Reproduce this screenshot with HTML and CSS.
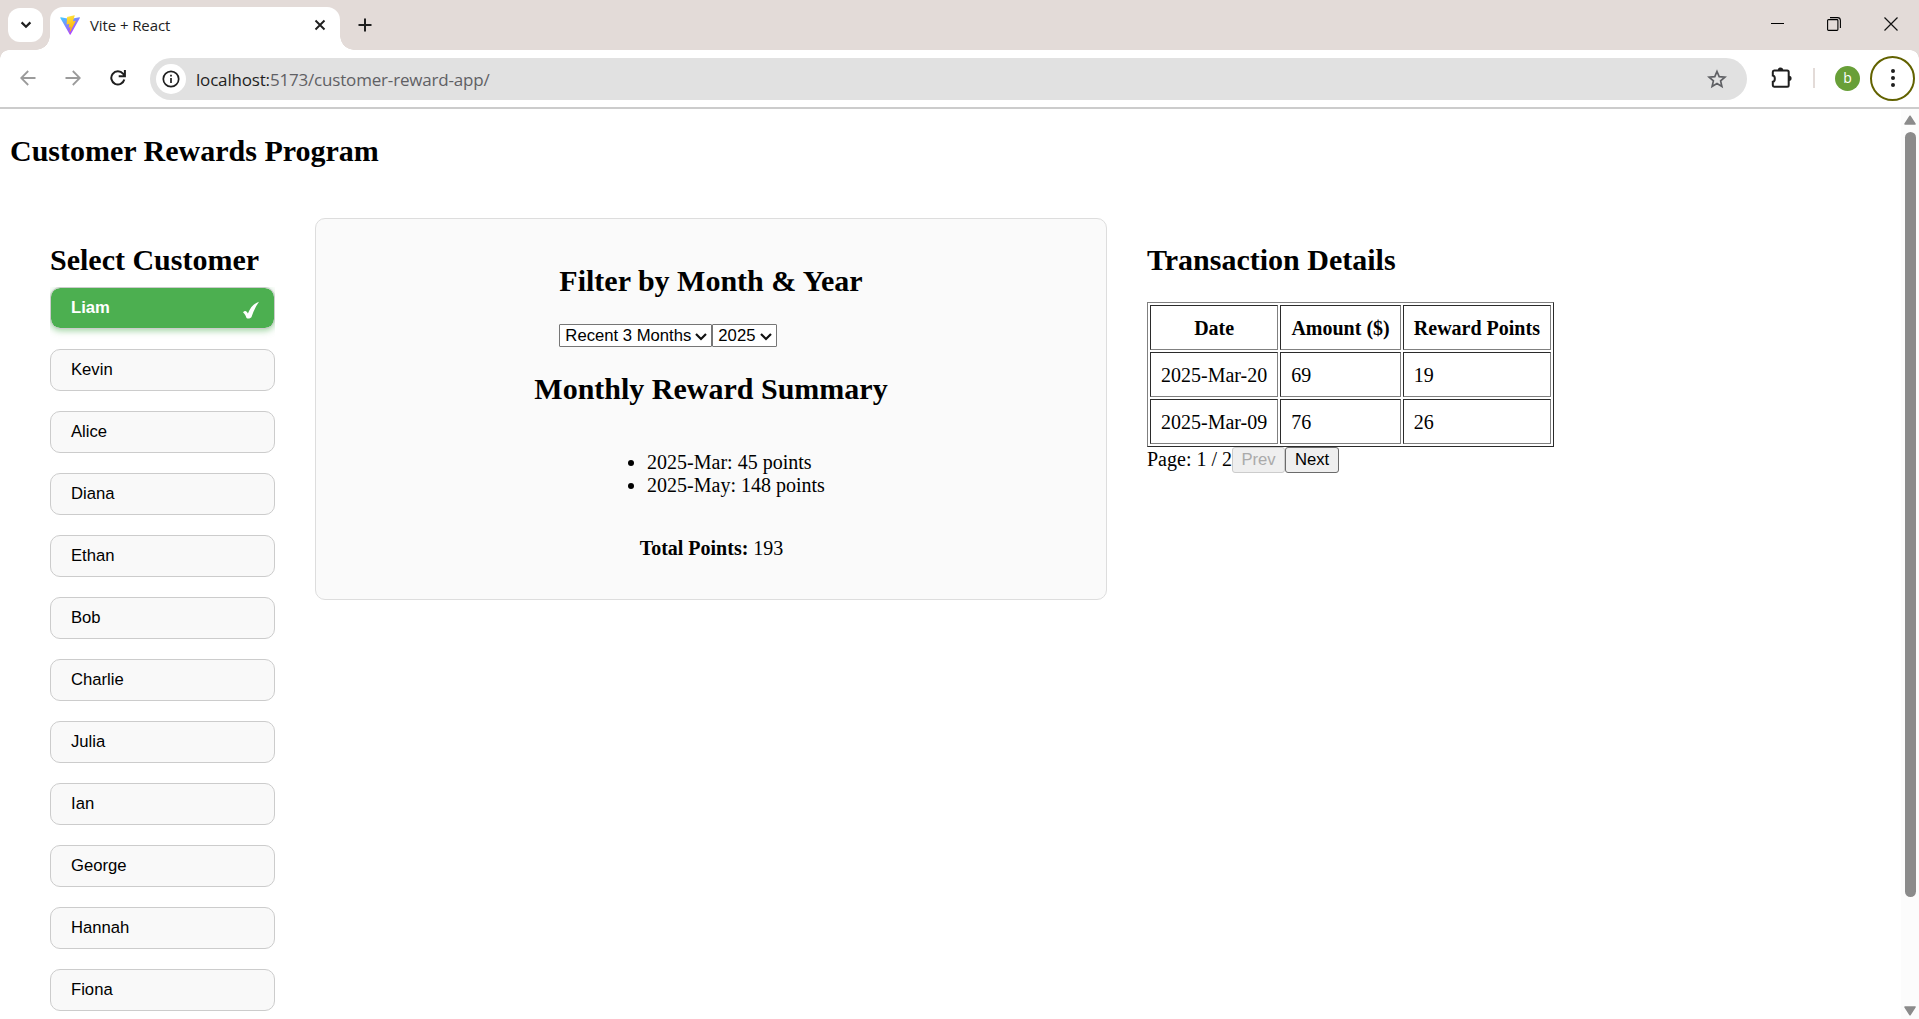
FILE: index.html
```html
<!DOCTYPE html>
<html lang="en">
<head>
<meta charset="utf-8">
<title>Vite + React</title>
<link rel="stylesheet" href="styles.css">
</head>
<body>
<header class="tabstrip">
  <div class="tab-search"><svg width="12" height="8" viewBox="0 0 12 8"><path d="M1.6 1.4 6 5.8l4.4-4.4" fill="none" stroke="#1f1f1f" stroke-width="2.2"/></svg></div>
  <div class="tab">
    <svg class="favicon" width="20" height="20" viewBox="0 0 32 32">
      <defs>
        <linearGradient id="va" x1="0" y1="0" x2=".7" y2="1"><stop offset="0" stop-color="#41d1ff"/><stop offset="1" stop-color="#bd34fe"/></linearGradient>
        <linearGradient id="vb" x1=".4" y1="0" x2=".6" y2="1"><stop offset="0" stop-color="#ffea83"/><stop offset=".1" stop-color="#ffdd35"/><stop offset="1" stop-color="#ffa800"/></linearGradient>
      </defs>
      <path fill="url(#va)" d="M31.8 4.8 17 31.3c-.3.5-1.1.5-1.4 0L.5 4.8c-.4-.6.2-1.3.8-1.2l14.9 2.7L31 3.6c.7-.1 1.2.6.8 1.2Z"/>
      <path fill="url(#vb)" d="M23 .5 12 2.7l-.7.6-.7 11.4c0 .3.3.6.6.5l3.100-.7c.3 0 .6.2.5.5l-.9 4.5c-.1.3.2.6.5.5l1.900-.6c.3-.1.600.2.5.5l-1.400 7c-.1.4.5.7.7.3L25 9.900c.1-.3-.1-.7-.5-.6l-3.200.6c-.3.1-.6-.2-.5-.5L23.500 1c0-.3-.2-.5-.5-.5Z"/>
    </svg>
    <span class="tab-title">Vite + React</span>
    <svg class="tab-close" width="12" height="12" viewBox="0 0 12 12"><path d="m1.500 1.500 9 9m0-9-9 9" stroke="#1f1f1f" stroke-width="1.900"/></svg>
  </div>
  <svg class="new-tab" width="14" height="14" viewBox="0 0 14 14"><path d="M7 .5v13M.5 7h13" stroke="#1f1f1f" stroke-width="2"/></svg>
  <div class="window-controls">
    <svg width="13" height="14" viewBox="0 0 13 14"><path d="M0 6.500h13" stroke="#000"/></svg>
    <svg width="14" height="14" viewBox="0 0 14 14"><path d="M3 .6h7.500a2.900 2.900 0 0 1 2.900 2.900V11M1.500 2.600H10a.9.9 0 0 1 .9.900v9a.9.9 0 0 1-.9.900H1.500a.9.900 0 0 1-.9-.9v-9a.9.9 0 0 1 .9-.9Z" fill="none" stroke="#000" stroke-width="1.100"/></svg>
    <svg width="14" height="14" viewBox="0 0 14 14"><path d="m.5.500 13 13m0-13-13 13" stroke="#111" stroke-width="1.200"/></svg>
  </div>
</header>

<nav class="toolbar">
  <svg width="16" height="16" viewBox="0 0 16 16"><path d="M15.500 8H1.500M8.200 1 1.200 8l7 7" fill="none" stroke="#9b9b9b" stroke-width="1.800"/></svg>
  <svg class="forward" width="16" height="16" viewBox="0 0 16 16"><path d="M.5 8h14M7.800 1l7 7-7 7" fill="none" stroke="#9b9b9b" stroke-width="1.800"/></svg>
  <svg class="reload" width="16" height="16" viewBox="0 0 16 16"><path d="M14.300 9.500A6.600 6.600 0 1 1 13 3.700l1.600 1.900M14.900 0v6.200H8.700" fill="none" stroke="#1f1f1f" stroke-width="2"/></svg>
  <div class="address">
    <span class="site-info"><svg width="18" height="18" viewBox="0 0 18 18"><circle cx="9" cy="9" r="7.700" fill="none" stroke="#1f1f1f" stroke-width="1.700"/><path d="M9 8v5M9 4.800v1.800" stroke="#1f1f1f" stroke-width="1.700"/></svg></span>
    <span class="url"><span class="host">localhost:</span>5173/customer-reward-app/</span>
    <svg class="star" width="20" height="20" viewBox="0 0 20 20"><path d="m10 2.500 2.200 5.200 5.700.5-4.300 3.700 1.300 5.500L10 14.500l-4.900 2.900 1.300-5.500-4.300-3.700 5.700-.5Z" fill="none" stroke="#5f6064" stroke-width="1.700"/></svg>
  </div>
  <svg class="extensions" width="22" height="22" viewBox="0 0 22 22"><path d="M3.200 3.500h13a1.500 1.500 0 0 1 1.500 1.500v13.200a1.500 1.500 0 0 1-1.500 1.500h-13A1.500 1.500 0 0 1 1.800 18.200v-3.400c2.700-.4 2.700-5.800 0-6.200V5a1.500 1.500 0 0 1 1.400-1.500Z" fill="none" stroke="#1f1f1f" stroke-width="2"/><path d="M6.800 3.200a2.700 2.700 0 0 1 5.400 0ZM18 8.700a2.600 2.600 0 0 1 0 5.200Z" fill="#1f1f1f"/></svg>
  <span class="divider"></span>
  <span class="avatar">b</span>
  <span class="menu"><svg width="6" height="20" viewBox="0 0 6 20"><g fill="#1f1f1f"><circle cx="3" cy="3" r="2"/><circle cx="3" cy="10" r="2"/><circle cx="3" cy="17" r="2"/></g></svg></span>
</nav>

<div class="viewport">
  <main class="page">
    <h2>Customer Rewards Program</h2>
    <div class="columns">
      <section class="customers">
        <h2>Select Customer</h2>
        <ul class="customer-list">
          <li class="customer selected">Liam<svg width="18" height="18" viewBox="0 0 18 18"><path d="M1 11.300c2-2.200 3.700-1.500 4.900 1.100C8.300 6.800 11.300 2.600 17 .700 13.600 5.500 11.300 10.500 9.400 16.300c-1.500 1.500-3.600 1.600-4.900.7-.7-2.200-1.900-4.200-3.500-5.700Z" fill="#fff"/></svg></li>
          <li class="customer">Kevin</li>
          <li class="customer">Alice</li>
          <li class="customer">Diana</li>
          <li class="customer">Ethan</li>
          <li class="customer">Bob</li>
          <li class="customer">Charlie</li>
          <li class="customer">Julia</li>
          <li class="customer">Ian</li>
          <li class="customer">George</li>
          <li class="customer">Hannah</li>
          <li class="customer">Fiona</li>
        </ul>
      </section>
      <section class="summary">
        <div class="filter">
          <h2>Filter by Month &amp; Year</h2>
          <div class="selects">
            <div class="select period">Recent 3 Months<svg width="12" height="8" viewBox="0 0 12 8"><path d="m1 1 5 5 5-5" fill="none" stroke="#111" stroke-width="2.200"/></svg></div>
            <div class="select year">2025<svg width="12" height="8" viewBox="0 0 12 8"><path d="m1 1 5 5 5-5" fill="none" stroke="#111" stroke-width="2.200"/></svg></div>
          </div>
        </div>
        <h2>Monthly Reward Summary</h2>
        <ul class="months">
          <li>2025-Mar: 45 points</li>
          <li>2025-May: 148 points</li>
        </ul>
        <p class="total"><strong>Total Points:</strong> 193</p>
      </section>
      <section class="transactions">
        <h2>Transaction Details</h2>
        <table>
          <thead><tr><th>Date</th><th>Amount ($)</th><th>Reward Points</th></tr></thead>
          <tbody>
            <tr><td>2025-Mar-20</td><td>69</td><td>19</td></tr>
            <tr><td>2025-Mar-09</td><td>76</td><td>26</td></tr>
          </tbody>
        </table>
        <div class="pager"><span>Page: 1 / 2</span><button class="prev" disabled>Prev</button><button class="next">Next</button></div>
      </section>
    </div>
  </main>
  <div class="scrollbar">
    <svg width="12" height="10" viewBox="0 0 12 10"><path d="M6 1.200 11 9H1Z" fill="#8b8b8b" stroke="#8b8b8b" stroke-width="1.500" stroke-linejoin="round"/></svg>
    <span class="thumb"></span>
    <svg class="down" width="12" height="10" viewBox="0 0 12 10"><path d="M6 8.800 11 1H1Z" fill="#8b8b8b" stroke="#8b8b8b" stroke-width="1.500" stroke-linejoin="round"/></svg>
  </div>
</div>
</body>
</html>
```
FILE: styles.css
```css
* { box-sizing: border-box; }
body {
  margin: 0;
  height: 1019px;
  overflow: hidden;
  display: flex;
  flex-direction: column;
  background: #fff;
  color: #000;
  font: 20px/23px "Liberation Serif", "Times New Roman", serif;
}
svg { display: block; flex: none; }

/* Browser tab strip */
.tabstrip {
  height: 50px;
  flex: none;
  display: flex;
  align-items: flex-start;
  background: #e3dbd8;
  padding: 7px 0 0 8px;
}
.tab-search {
  width: 35px;
  height: 34px;
  margin-top: 1px;
  border-radius: 12px;
  background: #fff;
  display: grid;
  place-items: center;
}
.tab {
  position: relative;
  width: 290px;
  height: 43px;
  margin-left: 7px;
  padding: 0 14px 7px 10px;
  border-radius: 13px 13px 0 0;
  background: #fff;
  display: flex;
  align-items: center;
}
.tab::before, .tab::after {
  content: "";
  position: absolute;
  bottom: 0;
  width: 14px;
  height: 14px;
}
.tab::before { left: -14px; background: radial-gradient(circle at 0 0, transparent 13.500px, #fff 14px); }
.tab::after { right: -14px; background: radial-gradient(circle at 100% 0, transparent 13.500px, #fff 14px); }
.tab-title { margin-left: 10px; font: 15px/20px "Open Sans", sans-serif; letter-spacing: -.1px; color: #1f1f1f; white-space: nowrap; }
.tab-close { margin-left: auto; }
.new-tab { margin: 11px 0 0 18px; }
.window-controls { margin: 10px 21px 0 auto; display: flex; gap: 43px; }

/* Browser toolbar */
.toolbar {
  position: relative;
  height: 59px;
  flex: none;
  display: flex;
  align-items: center;
  padding: 0 4px 1px 20px;
  border-bottom: 2px solid #ccc;
  background: #fff;
}
.toolbar::before, .toolbar::after {
  content: "";
  position: absolute;
  top: 0;
  width: 9px;
  height: 9px;
}
.toolbar::before { left: 0; background: radial-gradient(circle at 100% 100%, transparent 8.500px, #e3dbd8 9px); }
.toolbar::after { right: 0; background: radial-gradient(circle at 0 100%, transparent 8.500px, #e3dbd8 9px); }
.forward { margin-left: 29px; }
.reload { margin-left: 29px; }
.address {
  width: 1597px;
  height: 42px;
  margin: 2px 0 0 24px;
  padding: 0 20px 0 6px;
  border-radius: 21px;
  background: #e1e1e1;
  display: flex;
  align-items: center;
}
.site-info {
  width: 30px;
  height: 30px;
  border-radius: 50%;
  background: #fff;
  display: grid;
  place-items: center;
}
.url { margin-left: 10px; padding-top: 1px; font: 17px/24px "Open Sans", sans-serif; letter-spacing: -.18px; color: #5f6064; white-space: nowrap; }
.host { color: #1f1f1f; }
.star { margin-left: auto; }
.extensions { margin-left: 24px; }
.divider { width: 2px; height: 20px; margin-left: 20px; background: #e3dbd8; }
.avatar {
  width: 25px;
  height: 25px;
  margin-left: 20px;
  border-radius: 50%;
  background: #689f38;
  color: #fff;
  font: 14px/24px "Open Sans", sans-serif;
  text-align: center;
}
.menu {
  width: 45px;
  height: 45px;
  margin-left: auto;
  border: 2px solid #626200;
  border-radius: 50%;
  display: grid;
  place-items: center;
}

/* Page */
.viewport { flex: 1; min-height: 0; display: flex; }
.page { flex: 1; padding: 25px 10px 0; overflow: hidden; }
h2 { margin: 0; font-size: 30px; line-height: 34px; font-weight: bold; white-space: nowrap; }
.columns { display: flex; align-items: flex-start; gap: 40px; padding: 50px 40px 0; }
.customers { width: 225px; padding-top: 25px; }
.customer-list {
  list-style: none;
  margin: 10px 0 0;
  padding: 0;
  display: flex;
  flex-direction: column;
  gap: 20px;
}
.customer {
  height: 42px;
  padding: 0 14px 1px 20px;
  border: 1px solid #ccc;
  border-radius: 10px;
  background: #f9f9f9;
  font: 16.667px/20px "Liberation Sans", Arial, sans-serif;
  display: flex;
  align-items: center;
  justify-content: space-between;
}
.selected {
  border-color: #ccc;
  background: #4caf50;
  background-clip: padding-box;
  color: #fff;
  font-weight: bold;
  box-shadow: 0 2px 6px rgba(76, 175, 80, .5);
  clip-path: inset(0 0 -10px 0);
}
.selected svg { margin-top: 4px; }

.summary {
  width: 792px;
  height: 382px;
  padding: 45px 20px 20px;
  border: 1px solid #ddd;
  border-radius: 10px;
  background: #fafafa;
  display: flex;
  flex-direction: column;
  align-items: center;
}
.selects { display: flex; margin: 26px 0 25px; }
.select {
  height: 23px;
  border: 1px solid #767676;
  border-radius: 1px;
  background: #fff;
  padding: 0 4px 0 5px;
  font: 16.667px/21px "Liberation Sans", Arial, sans-serif;
  display: flex;
  align-items: center;
  justify-content: space-between;
  white-space: nowrap;
}
.select svg { margin-top: 2px; }
.period { width: 153px; }
.year { width: 65px; }
.months { margin: 45px 0 40px; padding-left: 50px; }
.total { margin: 0; padding-left: 1px; }

.transactions { padding-top: 25px; }
table {
  width: 407px;
  margin-top: 25px;
  border: 1px solid;
  border-color: #808080 #2b2b2b #2b2b2b #808080;
  border-spacing: 2px;
  border-collapse: separate;
}
th, td {
  height: 45px;
  padding: 11px 10px 9px;
  border: 1px solid;
  border-color: #2b2b2b #808080 #808080 #2b2b2b;
  white-space: nowrap;
}
td { text-align: left; }
.pager { display: flex; align-items: flex-start; }
.pager span { width: 85px; line-height: 24px; white-space: nowrap; }
.pager button {
  height: 26px;
  padding: 0;
  border: 1px solid #6b6b6b;
  border-radius: 3px;
  background: #efefef;
  color: #000;
  font: 16.667px/22px "Liberation Sans", Arial, sans-serif;
}
.pager .prev { width: 53px; border-color: #ccc; color: #aaa; }
.pager .next { width: 54px; }

.scrollbar {
  width: 18px;
  padding: 6px 0 3px;
  background: #fcfcfc;
  display: flex;
  flex-direction: column;
  align-items: center;
}
.thumb { width: 11px; height: 765px; margin-top: 7px; border-radius: 6px; background: #8b8b8b; }
.down { margin-top: auto; }
```
